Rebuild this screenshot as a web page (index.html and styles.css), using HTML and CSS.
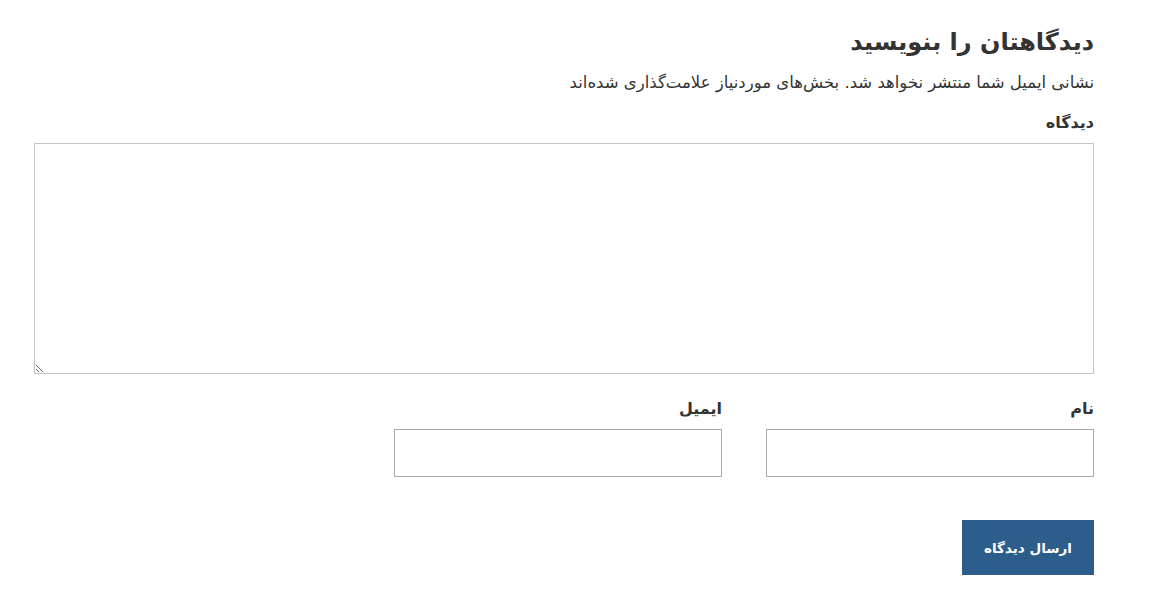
FILE: index.html
```html
<!DOCTYPE html>
<html lang="fa" dir="rtl">
<head>
    <meta charset="UTF-8">
    <meta name="viewport" content="width=device-width, initial-scale=1.0">
    <title>دیدگاهتان را بنویسید</title>
    <link rel="stylesheet" href="styles.css">
</head>
<body>

<div class="respond">
    <h3 class="reply-title">دیدگاهتان را بنویسید</h3>

    <form class="comment-form">
        <p class="notes">نشانی ایمیل شما منتشر نخواهد شد. بخش‌های موردنیاز علامت‌گذاری شده‌اند</p>

        <!-- متن دیدگاه -->
        <div class="field">
            <label for="comment">دیدگاه</label>
            <textarea id="comment" name="comment"></textarea>
        </div>

        <!-- نام و ایمیل -->
        <div class="fields-row">
            <div class="field">
                <label for="author">نام</label>
                <input id="author" name="author" type="text">
            </div>
            <div class="field">
                <label for="email">ایمیل</label>
                <input id="email" name="email" type="email">
            </div>
        </div>

        <div class="form-submit">
            <button type="submit" class="submit">ارسال دیدگاه</button>
        </div>
    </form>
</div>

</body>
</html>
```

FILE: styles.css
```css
body {
    margin: 0;
    background: #fff;
    font-family: "DejaVu Sans", "Noto Sans", sans-serif;
    color: #333;
}
.respond {
    width: 1060px;
    margin: 0 57px 0 34px;
    padding-top: 26px;
}
.reply-title {
    margin: 0;
    font-size: 24px;
    font-weight: bold;
    line-height: 32px;
    color: #333;
}
.notes {
    margin: 14px 0 0;
    font-size: 16.5px;
    line-height: 22px;
    color: #333;
}
.field label {
    display: block;
    font-size: 16px;
    font-weight: bold;
    line-height: 22px;
    margin-bottom: 9px;
    color: #333;
}
.comment-form > .field {
    margin-top: 18px;
}
textarea {
    display: block;
    box-sizing: border-box;
    width: 100%;
    height: 231px;
    border: 1px solid #c4c4c4;
    border-radius: 0;
    resize: vertical;
    direction: rtl;
    font-family: inherit;
}
.fields-row {
    display: grid;
    grid-template-columns: 328px 328px;
    gap: 44px;
    margin-top: 24px;
}
.fields-row input {
    display: block;
    box-sizing: border-box;
    width: 100%;
    height: 48px;
    border: 1px solid #aaa;
    border-radius: 0;
    font-family: inherit;
}
.form-submit {
    margin-top: 43px;
}
.submit {
    width: 132px;
    height: 55px;
    border: 0;
    background: #2d5d8b;
    color: #fff;
    font-family: inherit;
    font-size: 13.5px;
    font-weight: bold;
    cursor: pointer;
}
```
